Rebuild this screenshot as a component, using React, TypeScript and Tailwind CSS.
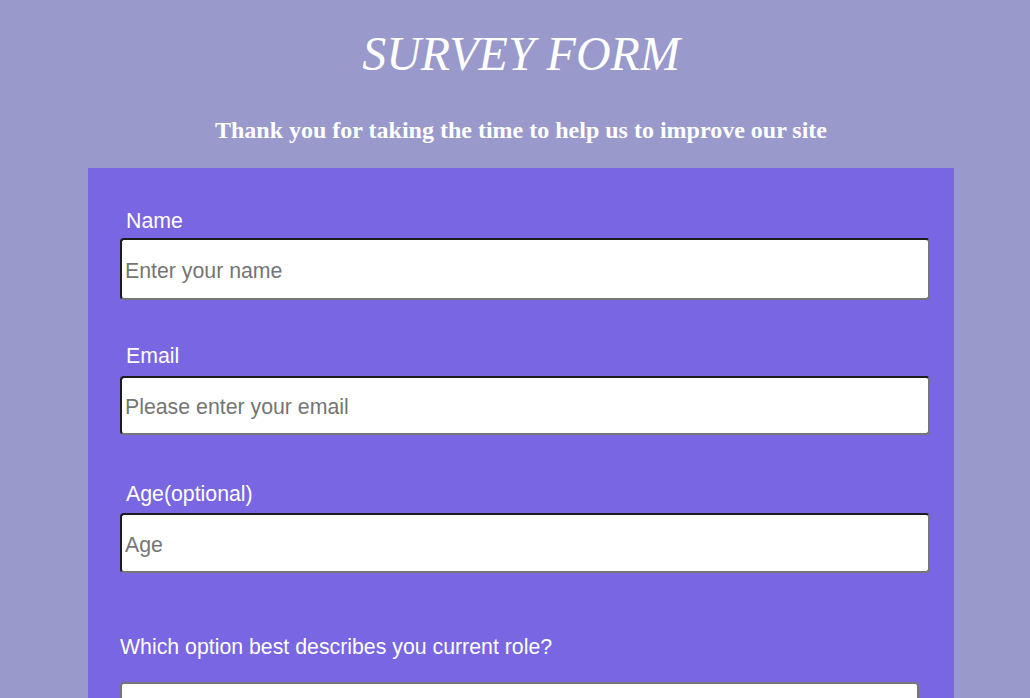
import React from "react";

const sans = { fontFamily: '"Liberation Sans", Arial, sans-serif' };

export default function App() {
  const inputCls =
    "block w-[810px] rounded-[4px] border-2 border-t-[#1c1c1c] border-l-[#1c1c1c] border-b-[#767676] border-r-[#767676] bg-white pl-[3px] pt-[4px] text-[21.3px] text-black placeholder:text-[#757575] outline-none font-['Liberation_Sans',Arial,sans-serif]";
  const labelCls =
    "block ml-[6px] pt-[1px] text-[21.3px] leading-[24px] text-white font-['Liberation_Sans',Arial,sans-serif]";
  return (
    <div className="min-h-[698px] w-full bg-[#9999cc] overflow-hidden">
      <div className="ml-[88px] w-[866px]">
        <h1 className="pt-[26px] text-center text-[48px] leading-[55px] italic font-normal text-white font-['Liberation_Serif','Times_New_Roman',serif]">
          SURVEY FORM
        </h1>
        <p className="mt-[35px] text-center text-[24px] leading-[28px] font-bold text-white font-['Liberation_Serif','Times_New_Roman',serif]">
          Thank you for taking the time to help us to improve our site
        </p>
        <form className="mt-[24px] bg-[#7866e3] pt-[40px] pl-[32px] pr-[24px] pb-[40px]" style={sans}>
          <label htmlFor="name" className={labelCls}>
            Name
          </label>
          <input id="name" type="text" placeholder="Enter your name" className={`${inputCls} mt-[5px] h-[62px]`} />

          <label htmlFor="email" className={`${labelCls} mt-[43px]`}>
            Email
          </label>
          <input id="email" type="email" placeholder="Please enter your email" className={`${inputCls} mt-[8px] h-[59px]`} />

          <label htmlFor="age" className={`${labelCls} mt-[46px]`}>
            Age(optional)
          </label>
          <input id="age" type="number" placeholder="Age" className={`${inputCls} mt-[7px] h-[60px]`} />

          <p className="mt-[62px] text-[21.3px] leading-[24px] text-white font-['Liberation_Sans',Arial,sans-serif]">
            Which option best describes you current role?
          </p>
          <select
            defaultValue=""
            className="mt-[23px] block h-[60px] w-[799px] appearance-none rounded-[4px] border-2 border-[#767676] bg-white px-[4px] text-[21px] text-black font-['Liberation_Sans',Arial,sans-serif]"
          >
            <option value="" disabled>
              Select current role
            </option>
            <option>Student</option>
            <option>Full Time Job</option>
            <option>Full Time Learner</option>
            <option>Prefer not to say</option>
            <option>Other</option>
          </select>
        </form>
      </div>
    </div>
  );
}
